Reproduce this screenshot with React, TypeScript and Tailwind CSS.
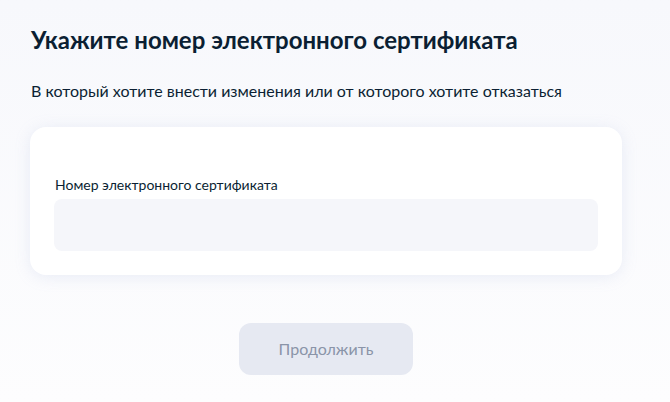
export default function App() {
  return (
    <div
      className="min-h-[402px] w-full bg-gradient-to-b from-[#f7f8fc] to-[#fdfdfe] pl-[30px] pt-6"
      style={{ fontFamily: "Lato, 'Noto Sans', sans-serif" }}
    >
      <div className="w-[592px]">
        <h1 className="pl-px text-[24px] font-bold leading-[32px] text-[#0b1f33]">
          Укажите номер электронного сертификата
        </h1>
        <p className="mt-[23px] pl-px text-[16px] leading-[24px] text-[#0b1f33]">
          В который хотите внести изменения или от которого хотите отказаться
        </p>
        <div className="mt-6 rounded-2xl bg-white px-6 pb-6 pt-12 shadow-[0_2px_16px_rgba(150,165,210,0.18)]">
          <label className="block pl-px text-[14px] leading-[20px] text-[#0b1f33]">
            Номер электронного сертификата
          </label>
          <div className="mt-1 h-[52px] rounded-lg bg-[#f5f6fa]" />
        </div>
        <div className="mt-12 flex justify-center">
          <button className="h-[52px] w-[174px] rounded-xl bg-[#e6e9f2] text-[16px] text-[#8a94a8]">
            Продолжить
          </button>
        </div>
      </div>
    </div>
  );
}
